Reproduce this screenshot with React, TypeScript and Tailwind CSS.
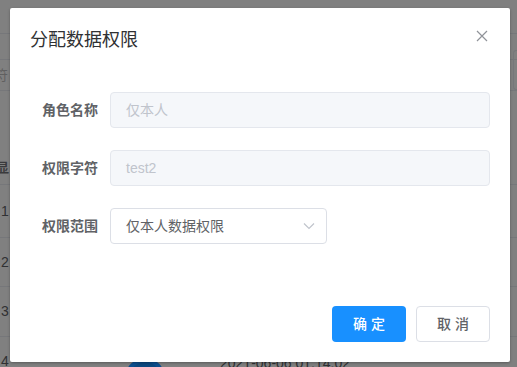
import React from "react";

const font = { fontFamily: '"Liberation Sans", "Noto Sans CJK SC", sans-serif' };

function BgRow({ n, h }: { n: string; h: string }) {
  return (
    <div className={`flex items-center border-b border-[#76777a] ${h}`}>
      <span className="text-[14px] text-[#303133] pl-[1px]">{n}</span>
    </div>
  );
}

export default function App() {
  return (
    <div className="relative w-[517px] h-[367px] overflow-hidden bg-[#808080]" style={font}>
      {/* background page (under overlay) */}
      <div className="flex flex-col w-full">
        <div className="h-[34px] border-b border-[#76777a]" />
        <div className="h-[25px]" />
        <div className="h-[32px] border-y border-[#76777a] flex items-center">
          <span className="text-[14px] text-[#606060] -ml-[6px]">符</span>
        </div>
        <div className="h-[60px]" />
        <div className="h-[34px] border-b border-[#76777a] flex items-center">
          <span className="text-[13px] text-[#3a3a3c] font-bold -ml-[4px]">显</span>
        </div>
        <BgRow n="1" h="h-[53px]" />
        <BgRow n="2" h="h-[49px]" />
        <BgRow n="3" h="h-[50px]" />
        <div className="relative h-[50px] flex items-start pt-[14px]">
          <span className="text-[14px] text-[#303133] pl-[1px]">4</span>
          <div className="absolute left-[125px] top-[21px] w-[40px] h-[40px] rounded-full border-[4px] border-[#0c4f8f] bg-[#0c487f]" />
          <span className="absolute left-[220px] top-[16px] text-[14px] text-[#303133]">2021-06-06 01:14:02</span>
        </div>
      </div>
      <div className="absolute right-[0px] top-[50px] w-[4px] h-[40px] border border-r-0 border-[#76777a] rounded-l-[3px]" />

      {/* dialog */}
      <div className="absolute left-[10px] top-[8px] w-[500px] h-[354px] bg-white rounded-[2px] shadow-[0_1px_3px_rgba(0,0,0,0.3)]">
        <div className="relative px-[20px] pt-[20px] pb-[10px]">
          <span className="block text-[18px] leading-[24px] text-[#303133]">分配数据权限</span>
          <button className="absolute right-[20px] top-[20px] w-[16px] h-[16px] flex items-center justify-center">
            <svg width="12" height="12" viewBox="0 0 12 12">
              <path d="M1 1L11 11M11 1L1 11" stroke="#909399" strokeWidth="1.2" />
            </svg>
          </button>
        </div>
        <div className="px-[20px] pt-[30px] pb-[52px] flex flex-col gap-[22px]">
          <div className="flex items-center">
            <label className="w-[80px] pr-[12px] text-right text-[14px] font-bold text-[#606266]">角色名称</label>
            <div className="flex-1 h-[36px] flex items-center px-[15px] bg-[#f5f7fa] border border-[#e4e7ed] rounded-[4px] text-[14px] text-[#c0c4cc]">仅本人</div>
          </div>
          <div className="flex items-center">
            <label className="w-[80px] pr-[12px] text-right text-[14px] font-bold text-[#606266]">权限字符</label>
            <div className="flex-1 h-[36px] flex items-center px-[15px] bg-[#f5f7fa] border border-[#e4e7ed] rounded-[4px] text-[14px] text-[#c0c4cc]">test2</div>
          </div>
          <div className="flex items-center">
            <label className="w-[80px] pr-[12px] text-right text-[14px] font-bold text-[#606266]">权限范围</label>
            <div className="w-[217px] h-[36px] flex items-center justify-between pl-[15px] pr-[11px] bg-white border border-[#dcdfe6] rounded-[4px] text-[14px] text-[#606266]">
              <span>仅本人数据权限</span>
              <svg width="12" height="8" viewBox="0 0 12 8">
                <path d="M1 1.5L6 6.5L11 1.5" stroke="#c0c4cc" strokeWidth="1.2" fill="none" />
              </svg>
            </div>
          </div>
        </div>
        <div className="flex justify-end gap-[10px] px-[20px] pt-[10px] pb-[20px]">
          <button className="w-[74px] h-[36px] rounded-[4px] bg-[#1890ff] text-white text-[14px] font-medium">确 定</button>
          <button className="w-[74px] h-[36px] rounded-[4px] bg-white border border-[#dcdfe6] text-[#606266] text-[14px] font-medium">取 消</button>
        </div>
      </div>
    </div>
  );
}
